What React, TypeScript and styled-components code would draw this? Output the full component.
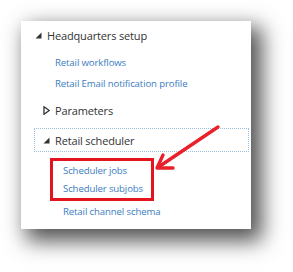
import React from "react";
import styled, { createGlobalStyle } from "styled-components";

const Global = createGlobalStyle`
  html, body { margin: 0; padding: 0; background: #ffffff; }
  body { font-family: "Open Sans", "Noto Sans", sans-serif; }
`;

const Page = styled.div`
  width: 293px;
  height: 272px;
  padding: 21px 0 0 21px;
  box-sizing: border-box;
`;

const Card = styled.div`
  position: relative;
  width: 230px;
  height: 208px;
  background: #ffffff;
  box-shadow: 8px 9px 20px 3px rgba(0, 0, 0, 0.68);
  padding-top: 4px;
  box-sizing: border-box;
  display: flex;
  flex-direction: column;
`;

const Row = styled.div<{ $indent: number; $h?: number; $mt?: number }>`
  display: flex;
  align-items: center;
  height: ${(p) => p.$h ?? 20}px;
  margin-top: ${(p) => p.$mt ?? 0}px;
  padding-left: ${(p) => p.$indent}px;
  box-sizing: border-box;
`;

const Caret = styled.span`
  width: 12px;
  display: inline-flex;
  align-items: center;
  flex: none;
`;

const Heading = styled.span`
  font-size: 11px;
  color: #333333;
  letter-spacing: -0.15px;
  white-space: nowrap;
`;

const Link = styled.span`
  font-size: 9.6px;
  color: #3b7cc1;
  letter-spacing: -0.12px;
  white-space: nowrap;
`;

const Group = styled.div<{ $mt?: number }>`
  display: flex;
  flex-direction: column;
  margin-top: ${(p) => p.$mt ?? 0}px;
`;

const FocusBox = styled.div`
  margin: 8px 0 0 13px;
  width: 215px;
  height: 24px;
  border: 1px dotted #9dbfe2;
  box-sizing: border-box;
  display: flex;
  align-items: center;
  padding-left: 8px;
`;

const Highlight = styled.div`
  margin: 6px 0 0 29px;
  width: 104px;
  height: 43px;
  border: 3px solid #e3141d;
  box-sizing: border-box;
  display: flex;
  flex-direction: column;
`;

const Annotation = styled.svg`
  position: absolute;
  left: 0;
  top: 0;
  width: 230px;
  height: 208px;
  pointer-events: none;
  overflow: visible;
`;

const Expanded = () => (
  <svg width="7" height="7" viewBox="0 0 7 7">
    <polygon points="6.5,0.5 6.5,6.5 0.5,6.5" fill="#333" />
  </svg>
);

const Collapsed = () => (
  <svg width="7" height="9" viewBox="0 0 7 9">
    <polygon points="1,0.8 6.2,4.5 1,8.2" fill="none" stroke="#333" strokeWidth="1.3" />
  </svg>
);

export default function App() {
  return (
    <>
      <Global />
      <Page>
        <Card>
          <Row $indent={14}>
            <Caret>
              <Expanded />
            </Caret>
            <Heading>Headquarters setup</Heading>
          </Row>
          <Group $mt={7}>
            <Row $indent={34} $h={21}>
              <Link>Retail workflows</Link>
            </Row>
            <Row $indent={34} $h={21}>
              <Link>Retail Email notification profile</Link>
            </Row>
          </Group>
          <Row $indent={22} $mt={6}>
            <Caret>
              <Collapsed />
            </Caret>
            <Heading>Parameters</Heading>
          </Row>
          <FocusBox>
            <Caret>
              <Expanded />
            </Caret>
            <Heading>Retail scheduler</Heading>
          </FocusBox>
          <Highlight>
            <Row $indent={10} $h={18}>
              <Link>Scheduler jobs</Link>
            </Row>
            <Row $indent={10} $h={18}>
              <Link>Scheduler subjobs</Link>
            </Row>
          </Highlight>
          <Row $indent={42}>
            <Link>Retail channel schema</Link>
          </Row>
          <Annotation viewBox="0 0 230 208">
            <line x1="197" y1="106" x2="139" y2="145" stroke="#e8212a" strokeWidth="3.4" strokeLinecap="round" />
            <polyline points="142,134 136,147 152,147" fill="none" stroke="#e8212a" strokeWidth="3.4" strokeLinecap="round" strokeLinejoin="round" />
          </Annotation>
        </Card>
      </Page>
    </>
  );
}
